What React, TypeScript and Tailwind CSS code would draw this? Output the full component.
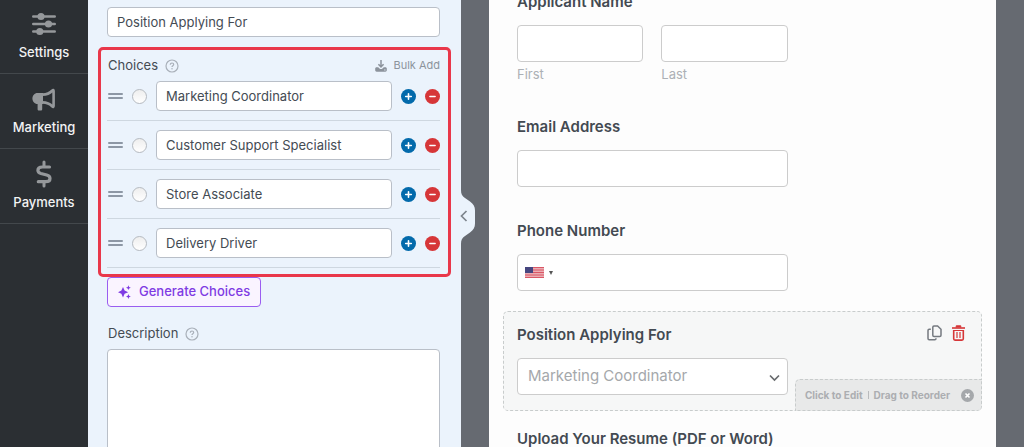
import type { ReactNode } from "react";
import clsx from "clsx";

const choices = ["Marketing Coordinator", "Customer Support Specialist", "Store Associate", "Delivery Driver"];

function SlidersIcon() {
  return (
    <svg viewBox="0 0 24 24" className="w-6 h-6" fill="#95989b" aria-hidden="true">
      <g stroke="#95989b" strokeWidth="2.6" strokeLinecap="round">
        <path d="M1.3 4.5h21.4M1.3 12h21.4M1.3 19.5h21.4" />
      </g>
      <circle cx="9" cy="4.5" r="3.6" />
      <circle cx="16.5" cy="12" r="3.6" />
      <circle cx="7.8" cy="19.5" r="3.6" />
    </svg>
  );
}

function BullhornIcon() {
  return (
    <svg viewBox="0 0 24 24" className="w-6 h-6" fill="#95989b" aria-hidden="true">
      <path d="M5.5 6H11v11h-.8v5.2c0 .9-.6 1.4-1.4 1.4H7c-.8 0-1.4-.5-1.4-1.4V17C2.5 17 .4 14.4.4 11.5S2.5 6 5.5 6Z" />
      <path
        d="M10.5 7.6c3.6 0 7.7-1.7 9.9-4.1.6-.7 1.200-.5 1.200.4v15.200c0 .9-.6 1.100-1.200.4-2.200-2.400-6.300-4.100-9.900-4.100"
        fill="none"
        stroke="#95989b"
        strokeWidth="2.6"
        strokeLinejoin="round"
      />
    </svg>
  );
}

function DollarIcon() {
  return (
    <svg viewBox="0 0 18 28" className="w-[18px] h-7" fill="none" stroke="#95989b" aria-hidden="true">
      <path d="M9 2v4M9 22v4" strokeWidth="3" strokeLinecap="round" />
      <path
        d="M14.5 7H7.3C4.6 7 2.9 8.4 2.9 10.3c0 1.700 1 2.600 3 3.200l5.800 1.500c2.200.6 3.300 1.700 3.300 3.400 0 2-1.700 3.300-4.400 3.300H3.3"
        strokeWidth="3.2"
        strokeLinecap="round"
      />
    </svg>
  );
}

function HelpIcon() {
  return (
    <svg viewBox="0 0 14 14" className="w-[14px] h-[14px]" fill="none" stroke="#a9b0b9" aria-hidden="true">
      <circle cx="7" cy="7" r="6" strokeWidth="1.2" />
      <path d="M5.300 5.700c0-1 .7-1.700 1.700-1.700s1.700.6 1.700 1.500C8.700 6.700 7 6.700 7 8" strokeWidth="1.2" />
      <circle cx="7" cy="9.7" r=".75" fill="#a9b0b9" stroke="none" />
    </svg>
  );
}

function DownloadIcon() {
  return (
    <svg viewBox="0 0 12 12" className="w-3 h-3" fill="none" stroke="#8c939c" aria-hidden="true">
      <path d="M6 0v6.500M3.400 4.300 6 6.900l2.600-2.600" strokeWidth="1.5" />
      <path
        d="M1.600 7.200h1.600L5.100 9h1.800l1.900-1.800h1.600c.8 0 1.400.6 1.400 1.400v1.700c0 .8-.6 1.400-1.400 1.400H1.600c-.8 0-1.400-.6-1.400-1.400V8.600c0-.8.6-1.400 1.400-1.400Z"
        fill="#8c939c"
        stroke="none"
      />
      <circle cx="9.9" cy="9.9" r=".6" fill="#ebf3fc" stroke="none" />
    </svg>
  );
}

function SparklesIcon() {
  return (
    <svg viewBox="0 0 13 14" className="w-[13px] h-[14px]" fill="#7f3be3" aria-hidden="true">
      <path d="M5 2 6.600 5.600 10.200 7.200 6.600 8.800 5 12.400 3.400 8.800 0 7.200 3.400 5.600Z" />
      <path d="m10.400.3.7 1.700 1.700.7-1.700.7-.7 1.700-.7-1.700L8 2.700 9.700 2ZM10.400 9.100l.7 1.700 1.700.7-1.700.7-.7 1.700-.7-1.700-1.700-.7 1.700-.7Z" />
    </svg>
  );
}

function RoundIcon({ minus = false }: { minus?: boolean }) {
  return (
    <svg viewBox="0 0 15 15" className="w-[15px] h-[15px]" aria-hidden="true">
      <circle cx="7.5" cy="7.5" r="7.5" fill={minus ? "#d63638" : "#036aab"} />
      <path
        d={minus ? "M4.900 7.500h5.200" : "M4.700 7.500h5.600M7.500 4.700v5.600"}
        stroke="white"
        strokeWidth="1.6"
        strokeLinecap="round"
      />
    </svg>
  );
}

function FlagIcon() {
  return (
    <svg viewBox="0 0 19 11" className="w-[19px] h-[11px]" aria-hidden="true">
      <path fill="#f3d9dc" d="M0 0h19v11H0z" />
      <path
        stroke="#d8505f"
        strokeWidth=".95"
        d="M0 .5h19M0 2.170h19M0 3.840h19M0 5.500h19M0 7.170h19M0 8.840h19M0 10.500h19"
      />
      <path fill="#46467f" d="M0 0h8v6H0z" />
    </svg>
  );
}

function NavItem({ label, children }: { label: string; children: ReactNode }) {
  return (
    <button
      type="button"
      className="flex flex-col items-center pt-[11px] pb-[11px] border-b border-[#43484c] text-[#f2f3f4] text-[13px] leading-5 font-medium"
    >
      <span className="flex items-center justify-center h-7 mb-1">{children}</span>
      {label}
    </button>
  );
}

function ChoiceRow({ label }: { label: string }) {
  return (
    <li className="flex items-center pb-[9px] border-b border-[#ced7e0]">
      <span className="flex flex-col gap-[2px] w-[15px] mx-px cursor-grab">
        <span className="h-[2px] rounded-full bg-[#8d97a5]" />
        <span className="h-[2px] rounded-full bg-[#8d97a5]" />
      </span>
      <input
        type="radio"
        name="default-choice"
        aria-label={`${label} as default`}
        className="appearance-none shrink-0 w-[15px] h-[15px] ml-2 rounded-full border border-[#b5bac0] bg-linear-to-b from-[#eeeeee] to-white"
      />
      <input
        type="text"
        aria-label="Choice label"
        defaultValue={label}
        className="flex-1 min-w-0 h-[30px] ml-[9px] px-[9px] rounded-[4px] border border-[#b9bfc8] bg-white text-[13px] text-[#444b53]"
      />
      <button type="button" aria-label={`Add after ${label}`} className="ml-[9px]">
        <RoundIcon />
      </button>
      <button type="button" aria-label={`Remove ${label}`} className="ml-[9px]">
        <RoundIcon minus />
      </button>
    </li>
  );
}

function PreviewField({ children, active = false }: { children: ReactNode; active?: boolean }) {
  return (
    <div
      className={clsx(
        "relative px-[13px] pt-[13px] pb-[15px] rounded-[5px] border border-dashed",
        active ? "border-[#c8cccc] bg-[#f6f7f7]" : "border-transparent"
      )}
    >
      {children}
    </div>
  );
}

const fieldLabel = "block mb-[13px] text-[15px] leading-5 font-semibold text-[#434a52]";
const fieldInput = "block w-full h-[37px] rounded-[4px] border border-[#cccccc] bg-white";
const subLabel = "block mt-1 text-[13px] leading-[17px] text-[#acb0b5]";

export default function App() {
  return (
    <div className="flex h-screen overflow-hidden bg-[#666a71] font-['Inter','Liberation_Sans',sans-serif]">
      {/* Left toolbar */}
      <nav className="flex flex-col shrink-0 w-[88px] -mt-px bg-[#2b2f33]">
        <NavItem label="Settings">
          <SlidersIcon />
        </NavItem>
        <NavItem label="Marketing">
          <BullhornIcon />
        </NavItem>
        <NavItem label="Payments">
          <DollarIcon />
        </NavItem>
      </nav>

      {/* Field options */}
      <aside className="relative shrink-0 w-[373px] px-[10px] pt-[7px] bg-[#ebf3fc]">
        <div className="pl-[9px] pr-[11px]">
          <input
            type="text"
            aria-label="Label"
            defaultValue="Position Applying For"
            className="block w-full h-[30px] px-[9px] rounded-[4px] border border-[#b9bfc8] bg-white text-[13px] text-[#444b53]"
          />
        </div>

        <section className="mt-[10px] pl-[6px] pr-[8px] pb-[6px] rounded-[5px] border-[3px] border-[#e9374a]">
          <div className="flex items-center h-[31px] text-[13px] text-[#444b53]">
            <h2 className="ml-px">Choices</h2>
            <button type="button" aria-label="Help with choices" className="ml-[7px]">
              <HelpIcon />
            </button>
            <button type="button" className="flex items-center gap-[6px] ml-auto text-[11px] text-[#8c939c]">
              <DownloadIcon />
              Bulk Add
            </button>
          </div>
          <ul className="flex flex-col gap-[9px]">
            {choices.map((choice) => (
              <ChoiceRow key={choice} label={choice} />
            ))}
          </ul>
        </section>

        <div className="pl-[9px] pr-[11px]">
          <button
            type="button"
            className="flex items-center gap-2 h-[30px] px-[10px] rounded-[4px] border border-[#9a5df0] bg-[#faf4ff] text-[13px] font-medium text-[#7f3be3]"
          >
            <SparklesIcon />
            Generate Choices
          </button>
          <div className="flex items-center gap-[7px] h-5 mt-[17px] mb-[5px] text-[13px] text-[#444b53]">
            <label htmlFor="description" className="ml-px">
              Description
            </label>
            <button type="button" aria-label="Help with description">
              <HelpIcon />
            </button>
          </div>
          <textarea
            id="description"
            className="block w-full h-32 resize-none rounded-[4px] border border-[#b9bfc8] bg-white p-2 text-[13px]"
          />
        </div>

        {/* Collapse handle */}
        <button type="button" aria-label="Collapse panel" className="absolute left-full top-[190px] w-[14px] h-[54px]">
          <svg viewBox="0 0 14 54" className="w-[14px] h-[54px] overflow-visible" aria-hidden="true">
            <path d="M-1 0H0C0 4 1 6 4 8l5 3.500c3.500 2.500 5 5 5 9v13c0 4-1.500 6.500-5 9L4 46c-3 2-4 4-4 8h-1Z" fill="#ebf3fc" />
            <path d="m5.500 21-5 5 5 5" fill="none" stroke="#7d848d" strokeWidth="1.7" />
          </svg>
        </button>
      </aside>

      {/* Form preview */}
      <main className="flex-1 min-w-0 mx-7 bg-[#fdfdfd]">
        <form className="flex flex-col gap-1 -mt-[22px] px-[14px]">
          <PreviewField>
            <fieldset>
              <legend className={fieldLabel}>Applicant Name</legend>
              <div className="flex gap-[18px] w-3/5">
                <label className="flex-1">
                  <input type="text" className={fieldInput} />
                  <span className={subLabel}>First</span>
                </label>
                <label className="flex-1">
                  <input type="text" className={fieldInput} />
                  <span className={subLabel}>Last</span>
                </label>
              </div>
            </fieldset>
          </PreviewField>

          <PreviewField>
            <label htmlFor="email" className={fieldLabel}>
              Email Address
            </label>
            <div className="w-3/5">
              <input id="email" type="email" className={fieldInput} />
            </div>
          </PreviewField>

          <PreviewField>
            <label htmlFor="phone" className={fieldLabel}>
              Phone Number
            </label>
            <div className="relative w-3/5">
              <input id="phone" type="tel" className={clsx(fieldInput, "pl-11")} />
              <button
                type="button"
                aria-label="Country"
                className="absolute inset-y-0 left-2 flex items-center gap-[5px]"
              >
                <FlagIcon />
                <svg viewBox="0 0 4 4" className="w-1 h-1" fill="#555555" aria-hidden="true">
                  <path d="M0 0h4L2 4Z" />
                </svg>
              </button>
            </div>
          </PreviewField>

          <PreviewField active>
            <label htmlFor="position" className={fieldLabel}>
              Position Applying For
            </label>
            <div className="relative w-3/5">
              <select
                id="position"
                defaultValue={choices[0]}
                className={clsx(fieldInput, "appearance-none pl-[10px] pr-8 text-[15px] text-[#a5a8ab]")}
              >
                {choices.map((choice) => (
                  <option key={choice}>{choice}</option>
                ))}
              </select>
              <svg
                viewBox="0 0 11 8"
                className="absolute right-2 top-4 w-[11px] h-2 pointer-events-none"
                fill="none"
                stroke="#686b6e"
                strokeWidth="1.7"
                aria-hidden="true"
              >
                <path d="m1 1.500 4.500 4.500L10 1.500" />
              </svg>
            </div>

            <div className="absolute right-4 top-[13px] flex items-center gap-[10px]">
              <button type="button" aria-label="Duplicate field">
                <svg viewBox="0 0 15 16" className="w-[15px] h-4" fill="none" stroke="#757a80" strokeWidth="1.5" aria-hidden="true">
                  <path d="M7 1h3.600L14 4.200v6c0 .7-.5 1.200-1.200 1.200H7c-.7 0-1.200-.5-1.200-1.200v-8C5.800 1.500 6.300 1 7 1Z" />
                  <path d="M3.800 4.300H2.200C1.500 4.300 1 4.800 1 5.500v8c0 .7.5 1.200 1.200 1.200h5.600c.7 0 1.200-.5 1.200-1.200v-.3" />
                </svg>
              </button>
              <button type="button" aria-label="Delete field">
                <svg viewBox="0 0 13 16" className="w-[13px] h-4" fill="none" stroke="#d63638" aria-hidden="true">
                  <path d="M0 3h13" strokeWidth="1.6" />
                  <path d="M4.200 2.500V.8h4.600v1.700" fill="#d63638" strokeWidth="1" />
                  <path d="M1.700 5v8.800c0 .8.500 1.300 1.300 1.300h7c.8 0 1.300-.5 1.300-1.300V5" strokeWidth="1.6" />
                  <path d="M1.700 5.500h9.600M5 7v6M8 7v6" strokeWidth="1.2" />
                </svg>
              </button>
            </div>

            <div className="absolute -right-px -bottom-px flex items-center h-8 pl-[9px] pr-[7px] rounded-tl-[5px] rounded-br-[5px] border border-dashed border-[#c8cccc] bg-[#e8e9e9] text-[10px] font-bold text-[#acaeb1] whitespace-nowrap">
              <span>Click to Edit</span>
              <span className="w-px h-2 mx-[5px] bg-[#b9bbbd]" />
              <span>Drag to Reorder</span>
              <button type="button" aria-label="Dismiss" className="ml-[11px]">
                <svg viewBox="0 0 13 13" className="w-[13px] h-[13px]" aria-hidden="true">
                  <circle cx="6.5" cy="6.5" r="6.5" fill="#a5a8ab" />
                  <path d="m4.500 4.500 4 4m0-4-4 4" stroke="white" strokeWidth="1.6" />
                </svg>
              </button>
            </div>
          </PreviewField>

          <PreviewField>
            <label htmlFor="resume" className={fieldLabel}>
              Upload Your Resume (PDF or Word)
            </label>
            <input id="resume" type="file" className="block w-full h-[37px]" />
          </PreviewField>
        </form>
      </main>
    </div>
  );
}
